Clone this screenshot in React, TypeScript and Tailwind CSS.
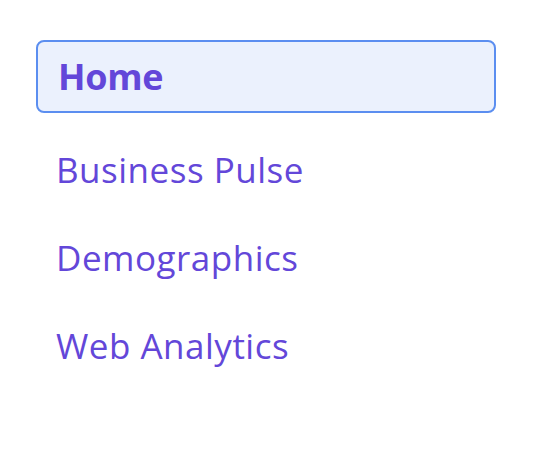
const items = ["Business Pulse", "Demographics", "Web Analytics"];

export default function App() {
  return (
    <div
      className="w-[550px] h-[464px] bg-white pt-[40px] pl-[36px]"
      style={{ fontFamily: '"Open Sans", sans-serif' }}
    >
      <nav className="w-[460px] flex flex-col">
        <div className="h-[73px] flex items-center pl-[20px] rounded-[8px] border-2 border-[#5b8ef0] bg-[#ebf1fd]">
          <span className="text-[36px] leading-none font-bold tracking-[-0.3px] text-[#6347d9]">Home</span>
        </div>
        <div className="mt-[12px] flex flex-col">
          {items.map((item) => (
            <div key={item} className="h-[88px] flex items-center pl-[20px]">
              <span className="text-[35px] leading-none tracking-[0.5px] text-[#6347d9]">{item}</span>
            </div>
          ))}
        </div>
      </nav>
    </div>
  );
}
